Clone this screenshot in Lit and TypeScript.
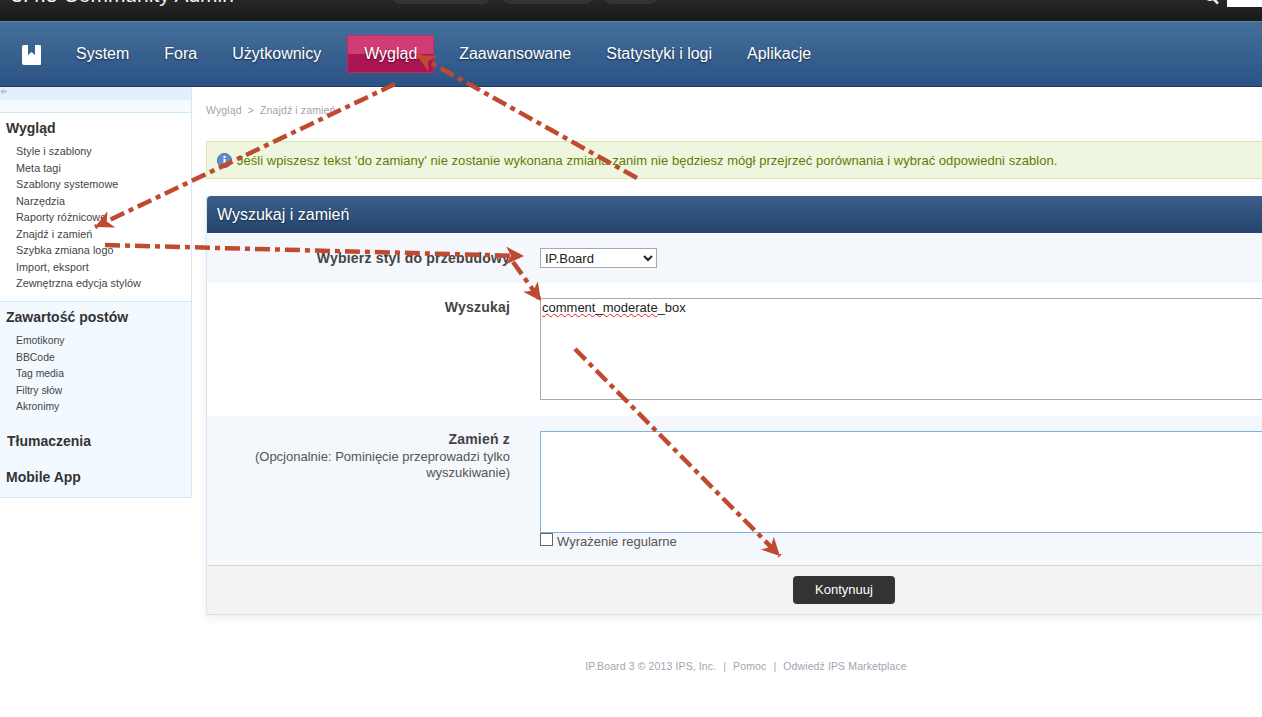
import { LitElement, html, css, svg } from "lit";
import { customElement } from "lit/decorators.js";

const ARROWS = [
  [637, 178, 417, 55],
  [395, 84, 95, 227],
  [105, 245, 524, 256],
  [513, 262, 541, 301],
  [575, 349, 780, 556],
];

@customElement("app-root")
export class AppRoot extends LitElement {
  static styles = css`
    :host { display: block; position: relative; width: 1262px; height: 717px; overflow: hidden; background: #fff; font-family: "Liberation Sans", Arial, sans-serif; color: #333; }
    .top { height: 21px; display: flex; align-items: flex-start; overflow: hidden; background: linear-gradient(#262626, #1a1a1a); }
    .brand { width: 392px; flex: none; padding-left: 11px; box-sizing: border-box; margin-top: -17px; font-size: 21px; line-height: 24px; color: #f2f2f2; white-space: nowrap; }
    .tab { height: 24px; margin-top: -20px; background: #333; border-radius: 8px; flex: none; }
    .t1 { width: 99px; margin-right: 11px; }
    .t2 { width: 91px; margin-right: 10px; }
    .t3 { width: 55px; }
    .search { margin-left: auto; display: flex; align-items: flex-start; gap: 7px; }
    .search svg { margin-top: -9px; display: block; }
    .sinput { width: 35px; height: 7px; background: #fff; }
    .nav { height: 66px; box-sizing: border-box; display: flex; align-items: center; padding-left: 22px; background: linear-gradient(#456f9b, #2b5284); border-top: 1px solid #5d86aa; border-bottom: 1px solid #1f3a5e; color: #fff; font-size: 16px; }
    .logo { display: block; width: 19px; height: 20px; margin-right: 18px; margin-top: 1px; flex: none; }
    .nav a { display: flex; align-items: center; height: 38px; padding: 0 17px; margin-right: 1px; box-sizing: border-box; text-shadow: 0 1px 2px rgba(0,0,0,.55); white-space: nowrap; }
    .nav a.on { background: linear-gradient(#d23c74 0 50%, #ab1553 50%); border: 1px solid #c22a66; border-radius: 2px; width: 87px; padding: 0 16px; margin: -1px 8px 0 8px; }
    .body { display: flex; align-items: flex-start; }
    .side { width: 192px; flex: none; box-sizing: border-box; border-right: 1px solid #d3e7f5; border-bottom: 1px solid #d3e7f5; background: #f3faff; height: 411px; }
    .collapse { height: 13px; background: #e3f0f9; }
    .collapse svg { display: block; }
    .strip { height: 12px; background: linear-gradient(#f2f9fd, #f5fbfe); border-bottom: 1px solid #cbe6f5; }
    .s1 { background: #fff; height: 189px; border-bottom: 1px solid #d3e7f5; padding-top: 6px; box-sizing: border-box; }
    .s2 { padding-top: 6px; }
    .side h3 { margin: 0 0 6px; padding-left: 6px; font-size: 14px; line-height: 18px; color: #333; font-weight: bold; }
    .side ul { list-style: none; margin: 0; padding: 0 0 0 16px; font-size: 10.8px; line-height: 16.5px; color: #444; letter-spacing: .05px; white-space: nowrap; }
    .s2 ul { font-size: 10.4px; letter-spacing: 0; padding-top: 1px; }
    .plain { margin-top: 16px !important; padding-left: 7px !important; }
    .plain.b { padding-left: 6px !important; margin-top: 18px !important; }
    .main { width: 1275px; flex: none; margin-left: 14px; }
    .crumb { height: 54px; box-sizing: border-box; padding-top: 16px; font-size: 10.5px; line-height: 14px; color: #a3a3ab; white-space: pre; letter-spacing: .12px; }
    .msg { height: 38px; box-sizing: border-box; display: flex; align-items: center; gap: 5px; padding-left: 10px; background: #eff6df; border: 1px solid #d6e8a8; color: #5e7d05; font-size: 13px; letter-spacing: .04px; white-space: nowrap; }
    .msg svg { flex: none; display: block; }
    .panel { margin-top: 17px; border-left: 1px solid #d5e6f6; border-bottom: 1px solid #d0e3f5; box-shadow: 0 3px 10px rgba(0,0,0,.07); }
    .phead { height: 37px; display: flex; align-items: center; padding-left: 10px; background: linear-gradient(#3b5f88, #234570); border-radius: 4px 4px 0 0; color: #fff; font-size: 16px; text-shadow: 0 1px 2px rgba(0,0,0,.5); }
    .row { display: grid; grid-template-columns: 303px 1fr; column-gap: 30px; padding-top: 15px; box-sizing: border-box; }
    .alt { background: #f4f7fb; }
    .r1 { height: 50px; }
    .r2 { height: 133px; background: #fff; }
    .r3 { height: 149px; }
    .label { text-align: right; font-size: 14px; line-height: 16px; font-weight: bold; color: #444; letter-spacing: .2px; }
    .r1 .label { padding-top: 2px; }
    .r2 .label { padding-top: 1px; }
    .label small { display: block; font-weight: normal; font-size: 13px; color: #555; letter-spacing: 0; margin-top: 2px; }
    select { display: block; width: 117px; height: 20px; font-family: "Liberation Sans", Arial, sans-serif; font-size: 13px; color: #222; background: #fff; border: 1px solid #a9a9a9; padding: 0; }
    .ta { width: 1000px; height: 102px; box-sizing: border-box; border: 1px solid #a9a9a9; background: #fff; font-size: 13px; line-height: 16px; padding: 1px; color: #222; }
    .ta.focus { border-color: #7eb0e6; }
    .ta span { text-decoration: underline wavy #d22; text-decoration-thickness: 1px; text-underline-offset: 1px; }
    .check { display: flex; align-items: flex-start; gap: 4px; font-size: 13px; line-height: 18px; color: #555; }
    .box { width: 13px; height: 13px; box-sizing: border-box; border: 1px solid #666; background: #fff; flex: none; }
    .actions { height: 49px; box-sizing: border-box; border-top: 1px solid #d5d5d5; background: #f3f3f3; display: flex; justify-content: center; align-items: flex-start; padding-top: 10px; }
    button { width: 102px; height: 28px; border: 0; border-radius: 4px; background: #333; color: #fff; font-family: inherit; font-size: 13px; padding: 0 0 2px; }
    .foot { margin-top: 44px; width: 1080px; text-align: center; font-size: 10.5px; line-height: 14px; color: #a3a3b0; letter-spacing: .12px; white-space: pre; }
    .foot i { font-style: normal; color: #8fb0d0; margin: 0 7px; }
    .overlay { position: absolute; left: 0; top: 0; width: 1262px; height: 717px; pointer-events: none; }
  `;

  render() {
    const menu1 = ["Style i szablony", "Meta tagi", "Szablony systemowe", "Narzędzia", "Raporty różnicowe", "Znajdź i zamień", "Szybka zmiana logo", "Import, eksport", "Zewnętrzna edycja stylów"];
    const menu2 = ["Emotikony", "BBCode", "Tag media", "Filtry słów", "Akronimy"];
    const nav = ["System", "Fora", "Użytkownicy", "Wygląd", "Zaawansowane", "Statystyki i logi", "Aplikacje"];
    return html`
      <div class="top">
        <div class="brand">3.4.5 Community Admin</div>
        <div class="tab t1"></div><div class="tab t2"></div><div class="tab t3"></div>
        <div class="search">
          <svg width="16" height="14" viewBox="0 0 16 14"><circle cx="6" cy="4" r="5" fill="none" stroke="#eee" stroke-width="2"/><path d="M9.5 8 L14 12.5" stroke="#eee" stroke-width="2.6"/></svg>
          <div class="sinput"></div>
        </div>
      </div>
      <div class="nav">
        <svg class="logo" viewBox="0 0 19 20"><path fill="#fff" d="M2 0h4v10l3.5-3 3.5 3V0h4a3 3 0 0 1 3 3v14a3 3 0 0 1-3 3H2a2 2 0 0 1-2-2V2a2 2 0 0 1 2-2z"/></svg>
        ${nav.map((n) => html`<a class=${n === "Wygląd" ? "on" : ""}>${n}</a>`)}
      </div>
      <div class="body">
        <aside class="side">
          <div class="collapse"><svg width="8" height="9" viewBox="0 0 8 9"><path d="M0 4.5 L3.5 1.5 V3.5 H7 V5.5 H3.5 V7.5 Z" fill="#b5c3cf"/></svg></div>
          <div class="strip"></div>
          <div class="s1">
            <h3>Wygląd</h3>
            <ul>${menu1.map((m) => html`<li>${m}</li>`)}</ul>
          </div>
          <div class="s2">
            <h3>Zawartość postów</h3>
            <ul>${menu2.map((m) => html`<li>${m}</li>`)}</ul>
            <h3 class="plain">Tłumaczenia</h3>
            <h3 class="plain b">Mobile App</h3>
          </div>
        </aside>
        <main class="main">
          <div class="crumb">Wygląd  &gt;  Znajdź i zamień</div>
          <div class="msg">
            <svg width="15" height="15" viewBox="0 0 15 15"><circle cx="7.5" cy="7.5" r="7" fill="#5f8fcb" stroke="#3f6aa5"/><circle cx="7.5" cy="4" r="1.2" fill="#fff"/><rect x="6.5" y="6" width="2" height="5.5" fill="#fff"/></svg>
            <span>Jeśli wpiszesz tekst 'do zamiany' nie zostanie wykonana zmiana zanim nie będziesz mógł przejrzeć porównania i wybrać odpowiedni szablon.</span>
          </div>
          <section class="panel">
            <div class="phead">Wyszukaj i zamień</div>
            <div class="row alt r1">
              <div class="label">Wybierz styl do przebudowy</div>
              <div><select><option>IP.Board</option></select></div>
            </div>
            <div class="row r2">
              <div class="label">Wyszukaj</div>
              <div class="ta"><span>comment_moderate</span>_box</div>
            </div>
            <div class="row alt r3">
              <div class="label">Zamień z<small>(Opcjonalnie: Pominięcie przeprowadzi tylko wyszukiwanie)</small></div>
              <div>
                <div class="ta focus"></div>
                <div class="check"><div class="box"></div>Wyrażenie regularne</div>
              </div>
            </div>
            <div class="actions"><button>Kontynuuj</button></div>
          </section>
          <div class="foot">IP.Board 3 © 2013 IPS, Inc.<i>|</i>Pomoc<i>|</i>Odwiedź IPS Marketplace</div>
        </main>
      </div>
      <svg class="overlay" viewBox="0 0 1262 717">
        <defs>
          <marker id="head" markerUnits="userSpaceOnUse" markerWidth="24" markerHeight="20" refX="18" refY="9" orient="auto">
            <path d="M0 0 L18 9 L0 18 L5 9 Z" fill="#c04a30"/>
          </marker>
        </defs>
        ${ARROWS.map(([a, b, c, d]) => svg`<line x1=${a} y1=${b} x2=${c} y2=${d} stroke="#c04a30" stroke-width="4.5" stroke-dasharray="15 5 5 5" marker-end="url(#head)"/>`)}
      </svg>
    `;
  }
}
